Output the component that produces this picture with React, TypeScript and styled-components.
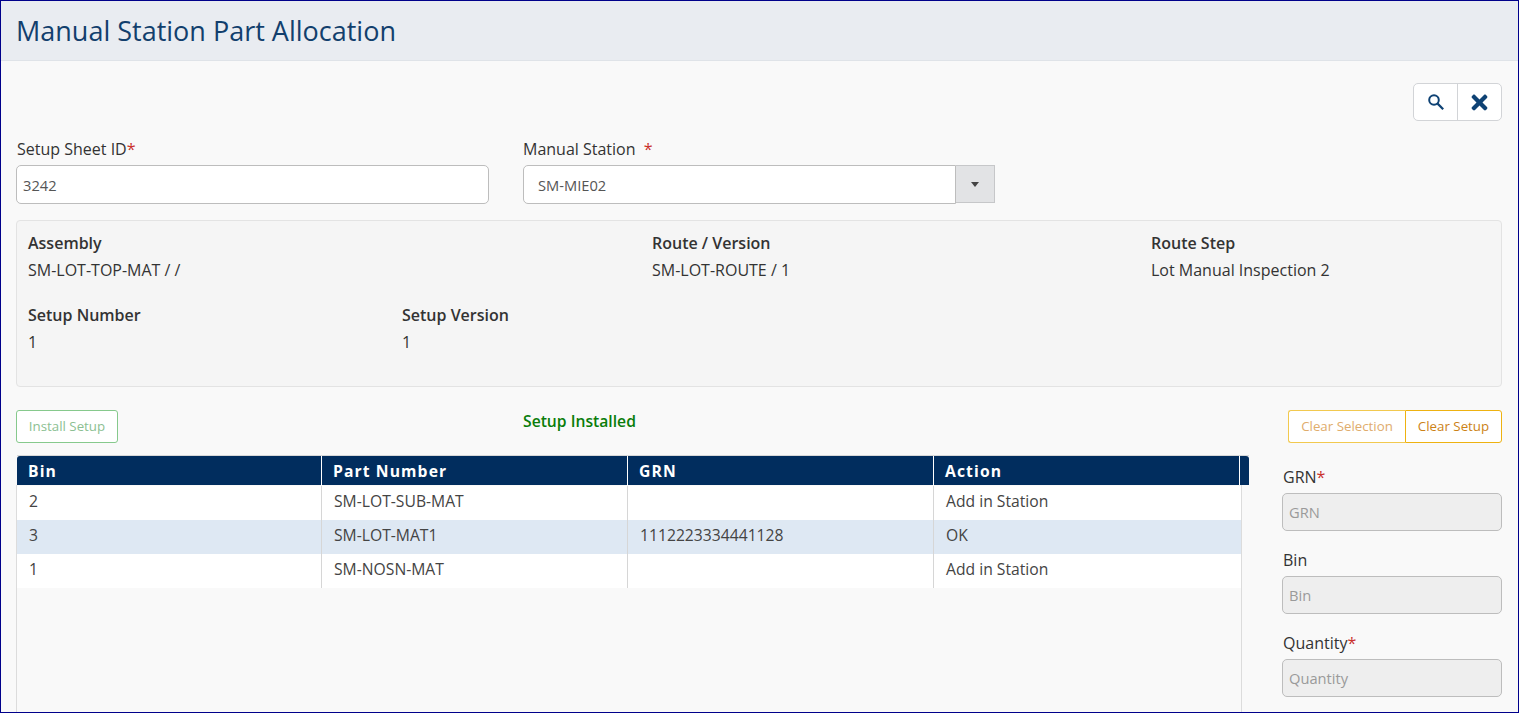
import styled, { createGlobalStyle } from 'styled-components'
import { FaTimes } from 'react-icons/fa'

const GlobalStyle = createGlobalStyle`
	html, body {
		margin: 0;
		padding: 0;
		overflow: hidden;
		background: #f9f9f9;
	}
	* {
		box-sizing: border-box;
	}
`

const Frame = styled.div`
	width: 1519px;
	height: 713px;
	display: flex;
	overflow: hidden;
	flex-direction: column;
	background: #f9f9f9;
	border: 1px solid #00008b;
	font-family: 'Open Sans', sans-serif;
	color: #333;
`

const Header = styled.header`
	height: 60px;
	flex-shrink: 0;
	display: flex;
	align-items: center;
	padding: 0 0 1px 15px;
	background: #e9ecf1;
	border-bottom: 1px solid #dfe3e8;
`

const Title = styled.h1`
	margin: 0;
	color: #123f6d;
	font-size: 27px;
	font-weight: 400;
`

const Content = styled.main`
	flex: 1;
	min-height: 0;
	display: flex;
	flex-direction: column;
	padding: 22px 16px 0 15px;
`

const Toolbar = styled.div`
	display: flex;
	justify-content: flex-end;
	margin-bottom: 18px;
`

const IconGroup = styled.div`
	display: flex;
	width: 89px;
	height: 38px;
	overflow: hidden;
	background: #fff;
	border-radius: 5px;
	border: 1px solid #d2d4d7;
`

const IconButton = styled.button<{ $divided?: boolean }>`
	flex: 1;
	padding: 0;
	border: none;
	display: flex;
	align-items: center;
	justify-content: center;
	background: transparent;
	color: #0e4274;
	border-left: ${(p) => (p.$divided ? '1px solid #d2d4d7' : 'none')};
`

const FormRow = styled.div`
	display: flex;
	gap: 34px;
`

const Field = styled.div<{ $width: number }>`
	width: ${(p) => p.$width}px;
	display: flex;
	flex-direction: column;
`

const Label = styled.label<{ $flush?: boolean }>`
	display: block;
	height: 26px;
	padding-left: ${(p) => (p.$flush ? 0 : 1)}px;
	color: #333;
	font-size: 16px;
	line-height: 20px;
`

const Required = styled.span`
	color: #c9302c;
`

const TextInput = styled.div<{ $disabled?: boolean }>`
	height: ${(p) => (p.$disabled ? 38 : 39)}px;
	display: flex;
	align-items: center;
	padding-left: 6px;
	font-size: 14.7px;
	border-radius: 5px;
	border: 1px solid #bdbdbd;
	color: ${(p) => (p.$disabled ? '#9a9a9a' : '#555')};
	background: ${(p) => (p.$disabled ? '#eeeeee' : '#fff')};
`

const SelectWrap = styled.div`
	display: flex;
	height: 39px;
`

const SelectValue = styled.div`
	flex: 1;
	display: flex;
	align-items: center;
	padding-left: 14px;
	color: #555;
	font-size: 14.7px;
	background: #fff;
	border: 1px solid #bdbdbd;
	border-radius: 5px 0 0 5px;
`

const SelectArrow = styled.div`
	width: 39px;
	display: flex;
	align-items: center;
	justify-content: center;
	margin-bottom: 1px;
	background: #e2e3e5;
	border: 1px solid #c6c7c9;
	border-left: none;
`

const Caret = styled.span`
	width: 0;
	height: 0;
	border-top: 5px solid #444;
	border-left: 4.5px solid transparent;
	border-right: 4.5px solid transparent;
`

const InfoPanel = styled.section`
	height: 167px;
	margin-top: 16px;
	padding: 12px 11px 0;
	background: #f5f5f5;
	border-radius: 4px;
	border: 1px solid #e3e3e3;
`

const InfoRow = styled.div`
	display: flex;
	height: 72px;
`

const InfoItem = styled.div<{ $width: number }>`
	width: ${(p) => p.$width}px;
	font-size: 16px;
`

const InfoLabel = styled.div`
	height: 27px;
	line-height: 20px;
	color: #333;
	font-weight: 600;
`

const InfoValue = styled.div`
	line-height: 20px;
	color: #333;
`

const ActionRow = styled.div`
	display: flex;
	align-items: flex-start;
	height: 33px;
	margin-top: 23px;
`

const OutlineButton = styled.button<{ $color: string; $text: string }>`
	width: 102px;
	height: 33px;
	padding: 0 0 2px;
	font-size: 13.3px;
	font-family: inherit;
	background: #fff;
	color: ${(p) => p.$text};
	border: 1px solid ${(p) => p.$color};
	border-radius: 3px;
`

const StatusText = styled.div`
	padding-left: 405px;
	color: #0a7d0a;
	font-size: 15.7px;
	font-weight: 600;
	line-height: 22px;
`

const ButtonGroup = styled.div`
	display: flex;
	margin-left: auto;
`

const LeftGroupButton = styled(OutlineButton)`
	width: 117px;
	border-right: none;
	border-radius: 3px 0 0 3px;
`

const RightGroupButton = styled(OutlineButton)`
	width: 97px;
	border-radius: 0 3px 3px 0;
`

const Lower = styled.div`
	flex: 1;
	min-height: 0;
	display: flex;
	margin-top: 12px;
`

const TableArea = styled.div`
	width: 1232px;
	margin-left: 1px;
	flex-shrink: 0;
	display: flex;
	flex-direction: column;
	border-top: 1px solid #d8d8d8;
`

const HeadRow = styled.div`
	height: 29px;
	flex-shrink: 0;
	display: flex;
	color: #fff;
	background: #012d5e;
	border-radius: 3px 3px 0 0;
`

const HeadCell = styled.div<{ $width: number }>`
	width: ${(p) => p.$width}px;
	display: flex;
	align-items: center;
	padding-left: 11px;
	font-size: 15.7px;
	font-weight: 700;
	letter-spacing: 1.1px;
	border-right: 1px solid #fff;
`

const TableBody = styled.div`
	flex: 1;
	width: 1226px;
	padding-top: 1px;
	background: #f9f9f9;
	border-right: 1px solid #dcdcdc;
	border-left: 1px solid #dcdcdc;
	margin-left: -1px;
`

const BodyRow = styled.div<{ $selected?: boolean }>`
	height: 34px;
	display: flex;
	background: ${(p) => (p.$selected ? '#dee8f3' : '#fff')};
`

const BodyCell = styled.div<{ $width: number }>`
	width: ${(p) => p.$width}px;
	display: flex;
	align-items: center;
	padding: 0 0 5px 12px;
	color: #444;
	font-size: 15.7px;
	border-right: 1px solid #d6d6d6;
	&:last-child {
		border-right: none;
	}
`

const SidePanel = styled.aside`
	flex: 1;
	display: flex;
	flex-direction: column;
	gap: 19px;
	padding: 12px 0 0 33px;
`

const columns = [
	{ name: 'Bin', width: 305 },
	{ name: 'Part Number', width: 306 },
	{ name: 'GRN', width: 306 },
	{ name: 'Action', width: 306 },
]

const rows = [
	{ cells: ['2', 'SM-LOT-SUB-MAT', '', 'Add in Station'] },
	{ cells: ['3', 'SM-LOT-MAT1', '1112223334441128', 'OK'], selected: true },
	{ cells: ['1', 'SM-NOSN-MAT', '', 'Add in Station'] },
]

const sideFields = [
	{ label: 'GRN', required: true },
	{ label: 'Bin', required: false },
	{ label: 'Quantity', required: true },
]

const App = () => {
	return (
		<>
			<GlobalStyle />
			<Frame>
				<Header>
					<Title>Manual Station Part Allocation</Title>
				</Header>
				<Content>
					<Toolbar>
						<IconGroup>
							<IconButton aria-label="Search">
								<svg width="16" height="16" viewBox="0 0 16 16" fill="none" stroke="currentColor">
									<circle cx="6" cy="6" r="4.8" strokeWidth="2" />
									<path d="M9.6 9.6 15.2 15.2" strokeWidth="2.2" />
								</svg>
							</IconButton>
							<IconButton $divided aria-label="Close">
								<FaTimes size={23} />
							</IconButton>
						</IconGroup>
					</Toolbar>
					<FormRow>
						<Field $width={473}>
							<Label>
								Setup Sheet ID<Required>*</Required>
							</Label>
							<TextInput>3242</TextInput>
						</Field>
						<Field $width={472}>
							<Label $flush>
								Manual Station <Required>&nbsp;*</Required>
							</Label>
							<SelectWrap>
								<SelectValue>SM-MIE02</SelectValue>
								<SelectArrow>
									<Caret />
								</SelectArrow>
							</SelectWrap>
						</Field>
					</FormRow>
					<InfoPanel>
						<InfoRow>
							<InfoItem $width={624}>
								<InfoLabel>Assembly</InfoLabel>
								<InfoValue>SM-LOT-TOP-MAT / /</InfoValue>
							</InfoItem>
							<InfoItem $width={499}>
								<InfoLabel>Route / Version</InfoLabel>
								<InfoValue>SM-LOT-ROUTE / 1</InfoValue>
							</InfoItem>
							<InfoItem $width={300}>
								<InfoLabel>Route Step</InfoLabel>
								<InfoValue>Lot Manual Inspection 2</InfoValue>
							</InfoItem>
						</InfoRow>
						<InfoRow>
							<InfoItem $width={374}>
								<InfoLabel>Setup Number</InfoLabel>
								<InfoValue>1</InfoValue>
							</InfoItem>
							<InfoItem $width={300}>
								<InfoLabel>Setup Version</InfoLabel>
								<InfoValue>1</InfoValue>
							</InfoItem>
						</InfoRow>
					</InfoPanel>
					<ActionRow>
						<OutlineButton $color="#86c98c" $text="#8cbf92">
							Install Setup
						</OutlineButton>
						<StatusText>Setup Installed</StatusText>
						<ButtonGroup>
							<LeftGroupButton $color="#f2c94f" $text="#e0ac6c">
								Clear Selection
							</LeftGroupButton>
							<RightGroupButton $color="#eeb211" $text="#cc8216">
								Clear Setup
							</RightGroupButton>
						</ButtonGroup>
					</ActionRow>
					<Lower>
						<TableArea>
							<HeadRow>
								{columns.map((col) => (
									<HeadCell key={col.name} $width={col.width}>
										{col.name}
									</HeadCell>
								))}
							</HeadRow>
							<TableBody>
								{rows.map((row) => (
									<BodyRow key={row.cells[1]} $selected={row.selected}>
										{row.cells.map((cell, i) => (
											<BodyCell key={columns[i].name} $width={columns[i].width}>
												{cell}
											</BodyCell>
										))}
									</BodyRow>
								))}
							</TableBody>
						</TableArea>
						<SidePanel>
							{sideFields.map((field) => (
								<div key={field.label}>
									<Label>
										{field.label}
										{field.required && <Required>*</Required>}
									</Label>
									<TextInput $disabled>{field.label}</TextInput>
								</div>
							))}
						</SidePanel>
					</Lower>
				</Content>
			</Frame>
		</>
	)
}

export default App
